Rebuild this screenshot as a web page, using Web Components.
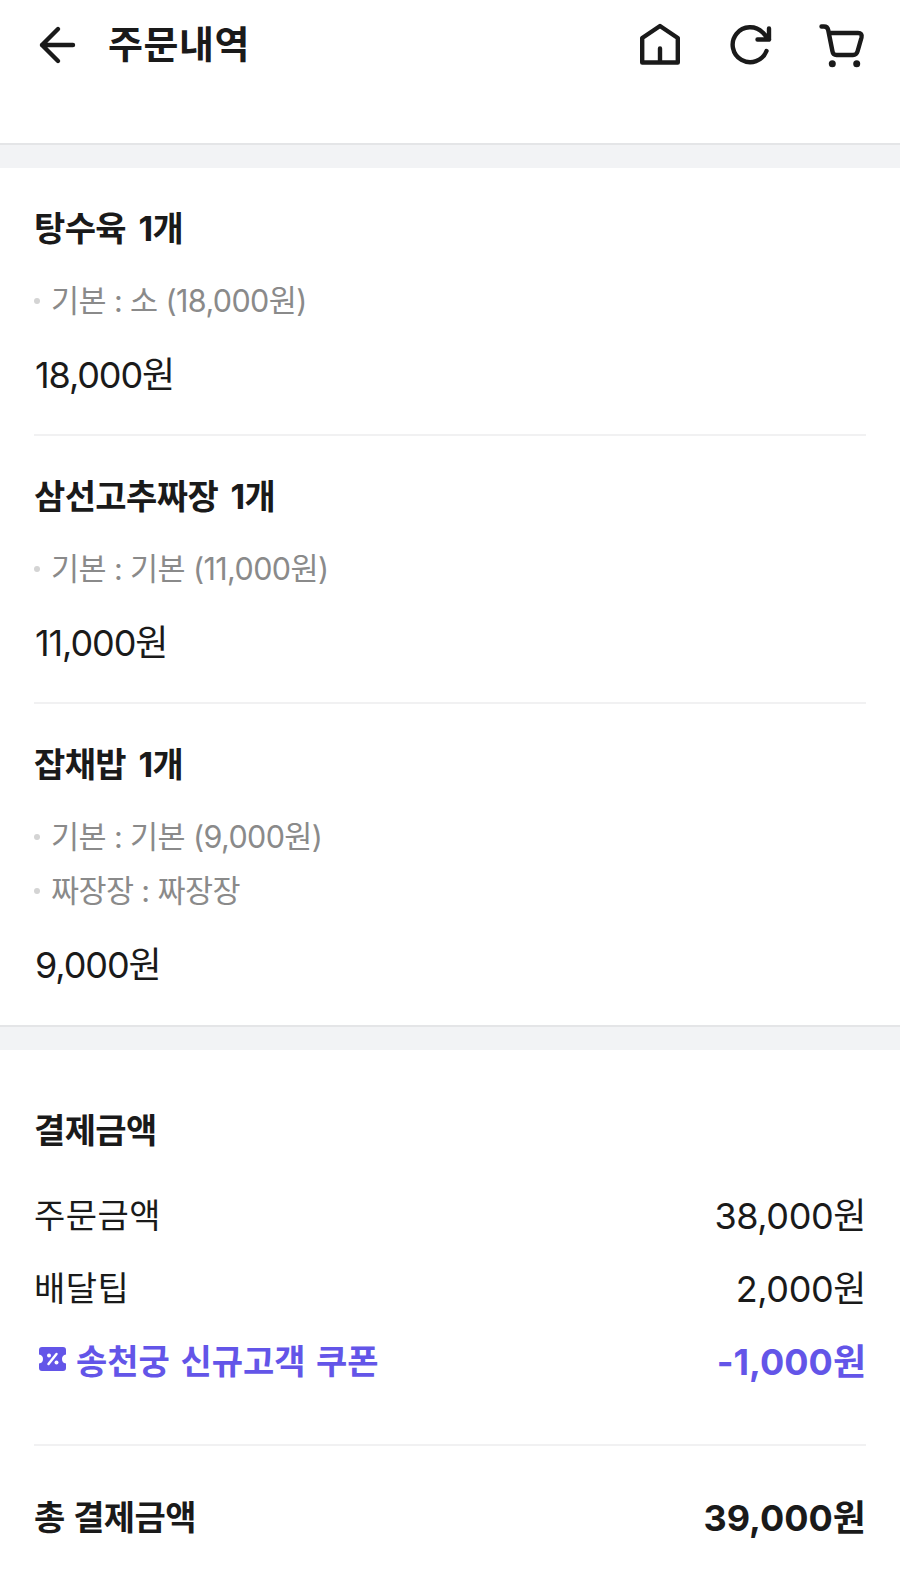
<!DOCTYPE html>
<html lang="ko">
<head>
<meta charset="utf-8">
<title>주문내역</title>
<style>
  html, body { margin: 0; background: #fff; }
  body { font-family: Inter, "Noto Sans CJK KR", sans-serif; color: #1a1a1a; width: 900px; height: 1591px; overflow: hidden; }
</style>
</head>
<body>
<order-header title-text="주문내역"></order-header>
<section-gap></section-gap>
<order-item name="탕수육 1개" price="18,000원">
  <order-option>기본 : 소 (18,000원)</order-option>
</order-item>
<order-item name="삼선고추짜장 1개" price="11,000원">
  <order-option>기본 : 기본 (11,000원)</order-option>
</order-item>
<order-item name="잡채밥 1개" price="9,000원" last>
  <order-option>기본 : 기본 (9,000원)</order-option>
  <order-option>짜장장 : 짜장장</order-option>
</order-item>
<section-gap></section-gap>
<pay-summary>
  <pay-row label="주문금액" value="38,000원"></pay-row>
  <pay-row label="배달팁" value="2,000원"></pay-row>
  <pay-row label="송천궁 신규고객 쿠폰" value="-1,000원" coupon></pay-row>
  <pay-total slot="total" label="총 결제금액" value="39,000원"></pay-total>
</pay-summary>

<script>
class OrderHeader extends HTMLElement{
    constructor(){
        super();
        this.attachShadow({ mode: "open" });
    }
    connectedCallback(){
        this.shadowRoot.innerHTML = `
        <style>
        :host{ display:flex; align-items:flex-start; height:143px; padding:0 35px 0 36px; box-sizing:border-box; }
        svg{ display:block; fill:none; stroke:#1a1a1a; stroke-width:4.4; stroke-linecap:round; stroke-linejoin:round; flex:none; }
        .back{ margin-top:25px; }
        h1{ margin:21px 0 0 30px; font-size:38px; line-height:46px; font-weight:700; letter-spacing:0.500px; flex:1; }
        .icons{ display:flex; }
        .home{ margin-top:23px; }
        .reload{ margin:25px 0 0 50px; }
        .cart{ margin:24px 0 0 47px; }
        </style>
        <svg class="back" width="42" height="40" viewBox="0 0 42 40"><path d="M6 20H37M22 4 6 20 22 36"/></svg>
        <h1>${this.getAttribute("title-text")}</h1>
        <div class="icons">
          <svg class="home" width="40" height="42" viewBox="0 0 40 42"><path d="M2.200 15V39.500H37.800V15L20 3Z M20 39V25.500"/></svg>
          <svg class="reload" width="42" height="40" viewBox="0 0 42 40"><path d="M36.500 26A17.500 17.500 0 1 1 33 7.800L39 14.500M39 3.500V14.500H27.500"/></svg>
          <svg class="cart" width="46" height="44" viewBox="0 0 46 44"><path d="M2.500 2.500H5Q8.500 2.500 9.200 6L13.500 27.500Q14 31 17.500 31H34Q37.500 31 38.500 27.500L42.500 13.500Q43.500 9 39 9H10.500"/><circle cx="13.300" cy="39.700" r="3.500" fill="#1a1a1a" stroke="none"/><circle cx="37.700" cy="39.700" r="3.500" fill="#1a1a1a" stroke="none"/></svg>
        </div>`;
    }
}
class SectionGap extends HTMLElement{
    constructor(){
        super();
        this.attachShadow({ mode: "open" }).innerHTML = `
        <style>
        :host{ display:block; height:25px; background:#f2f3f5; border-top:2px solid #e4e5e7; box-sizing:border-box; }
        </style>`;
    }
}
class OrderItem extends HTMLElement{
    constructor(){
        super();
        this.attachShadow({ mode: "open" });
    }
    connectedCallback(){
        const last = this.hasAttribute("last");
        this.shadowRoot.innerHTML = `
        <style>
        :host{ display:block; padding:0 34px; }
        .wrap{ padding-top:37px; height:${last ? "auto" : "229px"}; padding-bottom:${last ? "35px" : "0"}; ${last ? "" : "border-bottom:2px solid #f1f1f2;"} }
        .name{ font-size:34px; line-height:48px; font-weight:700; letter-spacing:-0.600px; word-spacing:5px; }
        .opts{ margin-top:19px; }
        .price{ margin:24px 0 0 1px; font-size:36px; line-height:50px; letter-spacing:-1.100px; }
        </style>
        <div class="wrap">
          <div class="name">${this.getAttribute("name")}</div>
          <div class="opts"><slot></slot></div>
          <div class="price">${this.getAttribute("price")}</div>
        </div>`;
    }
}
class OrderOption extends HTMLElement{
    constructor(){
        super();
        this.attachShadow({ mode: "open" }).innerHTML = `
        <style>
        :host{ display:flex; align-items:center; height:54px; font-size:30.500px; color:#8a8a8a; letter-spacing:-0.600px; }
        i{ width:6px; height:6px; border-radius:50%; background:#d4d4d4; margin:4px 11px 0 0; flex:none; }
        </style>
        <i></i><slot></slot>`;
    }
}
class PaySummary extends HTMLElement{
    constructor(){
        super();
        this.attachShadow({ mode: "open" }).innerHTML = `
        <style>
        :host{ display:block; padding:57px 34px 0; }
        h2{ margin:0; font-size:34px; line-height:48px; font-weight:700; letter-spacing:-0.600px; }
        .rows{ margin-top:33px; display:flex; flex-direction:column; gap:23px; padding-bottom:60px; border-bottom:2px solid #f1f1f2; }
        </style>
        <h2>결제금액</h2>
        <div class="rows"><slot></slot></div>
        <slot name="total"></slot>`;
    }
}
class PayRow extends HTMLElement{
    constructor(){
        super();
        this.attachShadow({ mode: "open" });
    }
    connectedCallback(){
        const coupon = this.hasAttribute("coupon");
        this.shadowRoot.innerHTML = `
        <style>
        :host{ display:flex; justify-content:space-between; align-items:center; height:50px; font-size:34px; ${coupon ? "color:#6355e8; font-weight:700;" : ""} }
        .label{ display:flex; align-items:center; gap:10px; ${coupon ? "word-spacing:2.500px;" : "letter-spacing:0.500px;"} }
        .value{ font-size:36px; letter-spacing:${coupon ? "0" : "-0.400px"}; }
        svg{ display:block; margin-left:5px; }
        </style>
        <span class="label">${coupon ? `<svg width="27" height="24" viewBox="0 0 27 24"><path fill="#6355e8" d="M3 0H24Q27 0 27 3V7.500Q23 8 23 12T27 16.500V21Q27 24 24 24H3Q0 24 0 21V16.500Q4 16 4 12T0 7.500V3Q0 0 3 0Z"/><path d="M17.500 7 9.500 17" stroke="#fff" stroke-width="2.500" stroke-linecap="round"/><circle cx="10" cy="8.500" r="2" fill="#fff"/><circle cx="17.500" cy="15.500" r="2" fill="#fff"/></svg>` : ""}${this.getAttribute("label")}</span>
        <span class="value">${this.getAttribute("value")}</span>`;
    }
}
class PayTotal extends HTMLElement{
    constructor(){
        super();
        this.attachShadow({ mode: "open" });
    }
    connectedCallback(){
        this.shadowRoot.innerHTML = `
        <style>
        :host{ display:flex; justify-content:space-between; align-items:center; height:50px; margin-top:44px; font-weight:700; }
        .l{ font-size:34px; letter-spacing:-0.600px; word-spacing:1px; }
        .v{ font-size:36px; }
        </style>
        <span class="l">${this.getAttribute("label")}</span>
        <span class="v">${this.getAttribute("value")}</span>`;
    }
}
window.customElements.define("order-header", OrderHeader);
window.customElements.define("section-gap", SectionGap);
window.customElements.define("order-item", OrderItem);
window.customElements.define("order-option", OrderOption);
window.customElements.define("pay-summary", PaySummary);
window.customElements.define("pay-row", PayRow);
window.customElements.define("pay-total", PayTotal);
</script>
</body>
</html>
